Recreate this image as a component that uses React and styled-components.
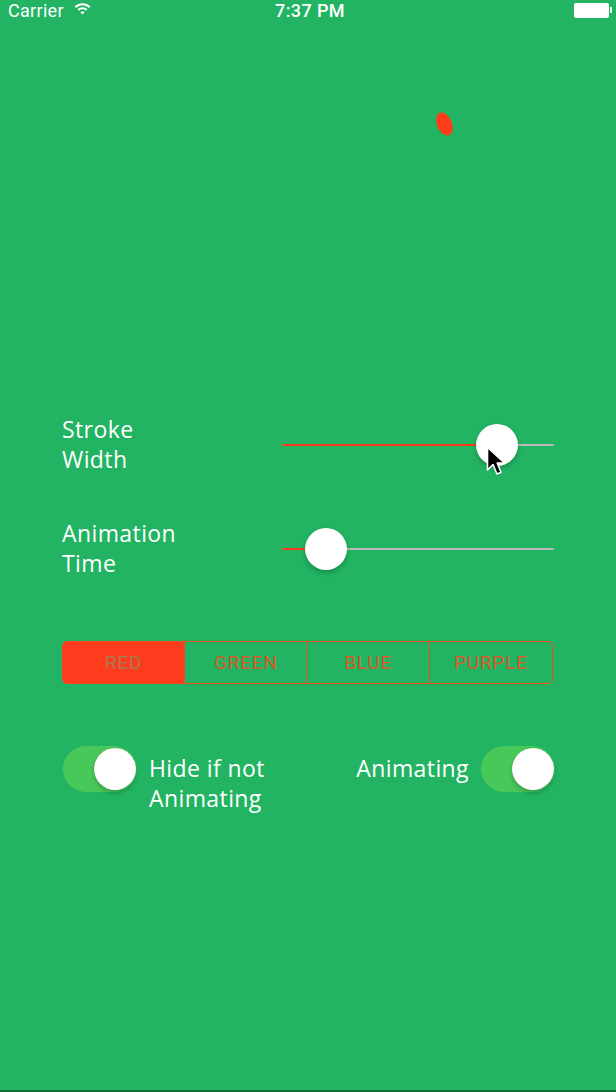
import React from "react";
import styled, { createGlobalStyle } from "styled-components";

const GlobalStyle = createGlobalStyle`
  html, body {
    margin: 0;
    padding: 0;
    background: #22b462;
  }
  * {
    box-sizing: border-box;
  }
`;

const segments = ["RED", "GREEN", "BLUE", "PURPLE"];

const App = () => {
  return (
    <Screen>
      <GlobalStyle />
      <StatusBar>
        <Carrier>
          Carrier
          <svg width="17" height="13" viewBox="0 0 16 12">
            <path d="M0.6 4.1a10.5 10.5 0 0 1 14.8 0l-1.4 1.4a8.5 8.5 0 0 0-12 0z" fill="#fff" />
            <path d="M3.3 6.8a6.6 6.6 0 0 1 9.4 0l-1.4 1.4a4.6 4.6 0 0 0-6.6 0z" fill="#fff" />
            <path d="M6 9.5a2.8 2.8 0 0 1 4 0L8 11.6z" fill="#fff" />
          </svg>
        </Carrier>
        <Clock>7:37 PM</Clock>
        <Battery>
          <BatteryBody />
          <BatteryTip />
        </Battery>
      </StatusBar>

      <Canvas>
        <Blob />
      </Canvas>

      <Controls>
        <SliderRow>
          <Label>
            Stroke
            <br />
            Width
          </Label>
          <Slider value={79} />
        </SliderRow>
        <SliderRow>
          <Label>
            Animation
            <br />
            Time
          </Label>
          <Slider value={16} />
        </SliderRow>

        <Segmented>
          {segments.map((s, i) => (
            <Segment key={s} selected={i === 0} last={i === segments.length - 1}>
              {s}
            </Segment>
          ))}
        </Segmented>

        <SwitchRow>
          <SwitchGroup>
            <Switch />
            <Label>
              Hide if not
              <br />
              Animating
            </Label>
          </SwitchGroup>
          <SwitchGroup>
            <Label>Animating</Label>
            <Switch />
          </SwitchGroup>
        </SwitchRow>
      </Controls>

      <Cursor viewBox="0 0 20 32" width="20" height="32">
        <path
          d="M1.5 1.5 L1.5 24 L7 18.5 L11 28 L15 26.3 L11.2 17 L18.5 17 Z"
          fill="#000"
          stroke="#fff"
          strokeWidth="1.6"
          strokeLinejoin="round"
        />
      </Cursor>
    </Screen>
  );
};

const Slider = ({ value }) => (
  <Track>
    <Fill style={{ width: `${value}%` }} />
    <Thumb style={{ left: `${value}%` }} />
  </Track>
);

export default App;

const Screen = styled.div`
  position: relative;
  width: 616px;
  height: 1092px;
  overflow: hidden;
  background: #22b462;
  font-family: "Open Sans", "Noto Sans", sans-serif;
  color: #fff;
  border-bottom: 2px solid #146b3c;
  display: flex;
  flex-direction: column;
`;

const StatusBar = styled.div`
  height: 20px;
  display: flex;
  align-items: center;
  justify-content: space-between;
  padding: 0 4px 0 8px;
  position: relative;
`;

const Carrier = styled.div`
  display: flex;
  align-items: center;
  gap: 10px;
  font-size: 18px;
  font-family: "Roboto", sans-serif;
  letter-spacing: 0.3px;

  svg {
    margin-top: -3px;
  }
`;

const Clock = styled.div`
  position: absolute;
  left: 0;
  right: 0;
  text-align: center;
  font-family: "Roboto", sans-serif;
  font-size: 18px;
  font-weight: 500;
  letter-spacing: 0.4px;
  padding-left: 4px;
`;

const Battery = styled.div`
  display: flex;
  align-items: center;
  gap: 1px;
`;

const BatteryBody = styled.div`
  width: 35px;
  height: 15px;
  background: #fff;
  border-radius: 2px;
`;

const BatteryTip = styled.div`
  width: 2px;
  height: 6px;
  background: #fff;
  border-radius: 0 1px 1px 0;
`;

const Canvas = styled.div`
  position: relative;
  height: 394px;
`;

const Blob = styled.div`
  position: absolute;
  left: 437px;
  top: 92px;
  width: 15px;
  height: 24px;
  border-radius: 50%;
  background: #ff3c1a;
  transform: rotate(-22deg);
`;

const Controls = styled.div`
  display: flex;
  flex-direction: column;
  padding: 0 62px;
`;

const Label = styled.div`
  font-size: 23px;
  line-height: 30px;
  letter-spacing: 0.4px;
  white-space: nowrap;
`;

const SliderRow = styled.div`
  display: flex;
  align-items: center;
  height: 60px;
  margin-bottom: 44px;

  ${Label} {
    width: 220px;
    flex: none;
  }
`;

const Track = styled.div`
  position: relative;
  flex: 1;
  height: 2px;
  margin-top: 1px;
  background: #b9b9b9;
  border-radius: 1px;
`;

const Fill = styled.div`
  position: absolute;
  left: 0;
  top: 0;
  bottom: 0;
  background: #ff3b1d;
  border-radius: 1px;
`;

const Thumb = styled.div`
  position: absolute;
  top: 50%;
  width: 42px;
  height: 42px;
  border-radius: 50%;
  background: #fff;
  transform: translate(-50%, -50%);
  box-shadow: 0 3px 5px rgba(0, 0, 0, 0.22), 0 0 1px rgba(0, 0, 0, 0.15);
`;

const Segmented = styled.div`
  display: grid;
  grid-template-columns: repeat(4, 1fr);
  height: 43px;
  margin-top: 19px;
  margin-right: 1px;
  border: 1px solid #f04a1f;
  border-radius: 5px;
  overflow: hidden;
`;

const Segment = styled.div`
  display: flex;
  align-items: center;
  justify-content: center;
  font-family: "Roboto", sans-serif;
  font-size: 19px;
  letter-spacing: 0.8px;
  color: ${(p) => (p.selected ? "#a67b50" : "#d65a28")};
  background: ${(p) => (p.selected ? "#ff3b1d" : "transparent")};
  border-right: ${(p) => (p.last ? "none" : "1px solid #f04a1f")};
`;

const SwitchRow = styled.div`
  display: flex;
  justify-content: space-between;
  align-items: flex-start;
  margin-top: 62px;
  margin-left: 1px;
  margin-right: -1px;
`;

const SwitchGroup = styled.div`
  display: flex;
  align-items: flex-start;
  gap: 12px;

  ${Label} {
    padding-top: 7px;
  }
`;

const Switch = styled.div`
  position: relative;
  width: 74px;
  height: 46px;
  border-radius: 23px;
  background: #49c85a;
  flex: none;

  &::after {
    content: "";
    position: absolute;
    right: 1px;
    top: 2px;
    width: 42px;
    height: 42px;
    border-radius: 50%;
    background: #fff;
    box-shadow: 0 3px 5px rgba(0, 0, 0, 0.2), 0 0 1px rgba(0, 0, 0, 0.2);
  }
`;

const Cursor = styled.svg`
  position: absolute;
  left: 486px;
  top: 446px;
`;
